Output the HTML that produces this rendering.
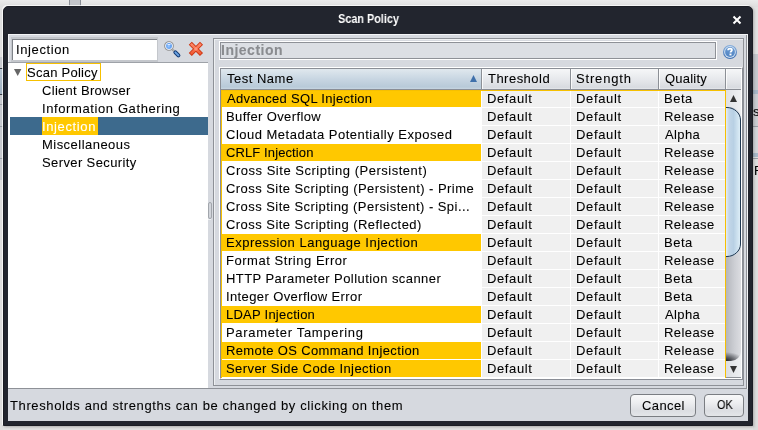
<!DOCTYPE html>
<html><head><meta charset="utf-8">
<style>
*{margin:0;padding:0;box-sizing:border-box}
html,body{width:758px;height:430px;overflow:hidden;background:#e2e2e2}
body{position:relative;font-family:"Liberation Sans",sans-serif;font-size:13px;color:#000}
.a{position:absolute}
.t{position:absolute;white-space:nowrap;line-height:13px;font-size:13px;will-change:transform;-webkit-text-stroke:0.08px currentColor}
svg{position:absolute;overflow:visible}
</style></head><body>
<div class="a" style="left:0px;top:0px;width:758px;height:7px;background:linear-gradient(#ebebeb,#dedede)"></div>
<div class="a" style="left:69px;top:0px;width:12px;height:6px;background:#c3c5ca;border-left:1px solid #8a8e96;border-right:1px solid #8a8e96"></div>
<div class="a" style="left:0px;top:7px;width:3px;height:50px;background:#e0e0e0"></div>
<div class="a" style="left:0px;top:57px;width:3px;height:12px;background:#c9cbd0"></div>
<div class="a" style="left:0px;top:68px;width:3px;height:1px;background:#3a3e46"></div>
<div class="a" style="left:0px;top:69px;width:3px;height:25px;background:linear-gradient(#b9c6d2,#9fb0c0)"></div>
<div class="a" style="left:0px;top:94px;width:3px;height:1px;background:#3a3e46"></div>
<div class="a" style="left:0px;top:95px;width:3px;height:85px;background:#c6c8cd"></div>
<div class="a" style="left:0px;top:104px;width:3px;height:1px;background:#9a9ea6"></div>
<div class="a" style="left:0px;top:126px;width:3px;height:1px;background:#9a9ea6"></div>
<div class="a" style="left:0px;top:158px;width:3px;height:1px;background:#9a9ea6"></div>
<div class="a" style="left:0px;top:180px;width:3px;height:250px;background:#dedede"></div>
<div class="a" style="left:753px;top:7px;width:5px;height:47px;background:#e2e2e2"></div>
<div class="a" style="left:753px;top:54px;width:5px;height:37px;background:#c6c9ce"></div>
<div class="a" style="left:753px;top:90px;width:5px;height:4px;background:#a9b9c9"></div>
<div class="a" style="left:753px;top:94px;width:5px;height:336px;background:#dedede"></div>
<div class="a" style="left:753px;top:94px;width:5px;height:32px;background:#cbcdd2"></div>
<div class="a" style="left:753px;top:127px;width:5px;height:26px;background:#d3d5d9"></div>
<div class="a" style="left:753px;top:126px;width:5px;height:1px;background:#9a9ea6"></div>
<div class="a" style="left:753px;top:100px;width:5px;height:80px;overflow:hidden"><div class="t" style="left:0px;top:5px;letter-spacing:0">s</div><div class="t" style="left:1px;top:64px;letter-spacing:0">F</div></div>
<div class="a" style="left:753px;top:153px;width:5px;height:4px;background:#a9b9c9"></div>
<div class="a" style="left:753px;top:158px;width:5px;height:1px;background:#9a9ea6"></div>
<div class="a" style="left:753px;top:426px;width:5px;height:4px;background:#dcdcdc"></div>
<div class="a" style="left:3px;top:6px;width:750px;height:420px;background:#22252e;border:1px solid #1b1d24;border-radius:5px 5px 0 0;box-shadow:-1px -1px 0 0 rgba(255,255,255,0.75),1px 1px 3px rgba(0,0,0,0.25)"></div>
<div class="t" style="left:337.90px;top:13px;color:#fff;font-size:12px;font-weight:bold;letter-spacing:0.000px;transform:scaleX(0.9030);transform-origin:1px 0;-webkit-text-stroke:0;">Scan Policy</div>
<svg style="left:732px;top:15px" width="10" height="10" viewBox="0 0 10 10"><path d="M1.5 1.5L8.5 8.5M8.5 1.5L1.5 8.5" stroke="#fff" stroke-width="2" stroke-linecap="butt"/></svg>
<div class="a" style="left:8px;top:34px;width:740px;height:387px;background:#d6d9df"></div>
<div class="a" style="left:8px;top:34px;width:740px;height:1px;background:#f4f5f7"></div>
<div class="a" style="left:8px;top:34px;width:1px;height:28px;background:#f4f5f7"></div>
<div class="a" style="left:746px;top:35px;width:1px;height:354px;background:#8e9197"></div>
<div class="a" style="left:747px;top:35px;width:1px;height:354px;background:#f4f5f7"></div>
<div class="a" style="left:8px;top:388px;width:739px;height:1px;background:#8e9197"></div>
<div class="a" style="left:11px;top:37px;width:147px;height:25px;background:#c4c7cc"></div>
<div class="a" style="left:12px;top:39px;width:145px;height:21px;background:#fff;border-top:1px solid #80848a;border-left:1px solid #80848a"></div>
<div class="t" style="left:16.00px;top:43px;color:#000;font-size:13px;letter-spacing:0.613px;">Injection</div>
<svg style="left:162px;top:39px" width="20" height="20" viewBox="0 0 20 20">
<defs><radialGradient id="gl" cx="0.45" cy="0.55" r="0.6"><stop offset="0" stop-color="#9cc8ff"/><stop offset="0.6" stop-color="#5c9df2"/><stop offset="1" stop-color="#4a8ae6"/></radialGradient>
<linearGradient id="hd" x1="0" y1="0" x2="1" y2="0"><stop offset="0" stop-color="#3c78c8"/><stop offset="1" stop-color="#8cbcf0"/></linearGradient></defs>
<line x1="10" y1="10" x2="12.2" y2="12.2" stroke="#9a9a9a" stroke-width="2.2"/>
<line x1="10.6" y1="10.3" x2="11.8" y2="11.5" stroke="#f4f4f4" stroke-width="0.8"/>
<line x1="13.4" y1="13.4" x2="16.4" y2="16.4" stroke="#123a74" stroke-width="4" stroke-linecap="round"/>
<line x1="13.4" y1="13.4" x2="16.4" y2="16.4" stroke="#6aa2e2" stroke-width="2" stroke-linecap="round"/>
<circle cx="7" cy="7" r="4.3" fill="none" stroke="#8c8c8c" stroke-width="1.1"/>
<circle cx="7" cy="7" r="3.5" fill="url(#gl)" stroke="#f6f6f6" stroke-width="0.9"/>
<ellipse cx="7" cy="5.6" rx="1.8" ry="0.7" fill="#fff" opacity="0.85"/>
</svg>
<svg style="left:186px;top:39px" width="20" height="20" viewBox="0 0 20 20">
<defs><linearGradient id="rx" x1="0" y1="0" x2="0" y2="1"><stop offset="0" stop-color="#ff8a6a"/><stop offset="1" stop-color="#f05a34"/></linearGradient></defs>
<path d="M4.3 4.3L15.5 15.5M15.5 4.3L4.3 15.5" stroke="#cc3412" stroke-width="4.3" stroke-linecap="butt"/>
<path d="M4.9 4.9L14.9 14.9M14.9 4.9L4.9 14.9" stroke="url(#rx)" stroke-width="2.6" stroke-linecap="butt"/>
<circle cx="9.9" cy="9.9" r="1.6" fill="#ff9478"/>
</svg>
<div class="a" style="left:8px;top:62px;width:200px;height:326px;background:#fff"></div>
<div class="a" style="left:8px;top:62px;width:200px;height:1px;background:#9ea2a8"></div>
<svg style="left:14px;top:69px" width="8" height="7" viewBox="0 0 8 7"><path d="M0 0H7.4L3.7 7Z" fill="#666"/></svg>
<div class="a" style="left:26px;top:63px;width:75px;height:18px;border:1px solid #f6c000"></div>
<div class="t" style="left:27.20px;top:66px;color:#000;font-size:13px;letter-spacing:0.260px;">Scan Policy</div>
<div class="t" style="left:42.30px;top:84px;color:#000;font-size:13px;letter-spacing:0.300px;">Client Browser</div>
<div class="t" style="left:42.30px;top:102px;color:#000;font-size:13px;letter-spacing:0.605px;">Information Gathering</div>
<div class="a" style="left:10px;top:117px;width:198px;height:18px;background:#3d6a8d"></div>
<div class="a" style="left:42px;top:117px;width:56px;height:18px;background:#ffc800"></div>
<div class="t" style="left:42.30px;top:120px;color:#fff;font-size:13px;letter-spacing:0.625px;">Injection</div>
<div class="t" style="left:42.30px;top:138px;color:#000;font-size:13px;letter-spacing:0.467px;">Miscellaneous</div>
<div class="t" style="left:42.30px;top:156px;color:#000;font-size:13px;letter-spacing:0.386px;">Server Security</div>
<div class="a" style="left:208px;top:202px;width:4px;height:17px;border:1px solid #a2a6ac;border-radius:2px;background:#d2d5db"></div>
<div class="a" style="left:208px;top:219px;width:3px;height:1px;background:#eef0f3"></div>
<div class="a" style="left:213px;top:38px;width:531px;height:348px;border:1px solid #8e9197;box-shadow:inset 1px 1px 0 #eef0f2"></div>
<div class="a" style="left:219px;top:41px;width:498px;height:19px;background:#dcdfe4;border:1px solid #fff"></div>
<div class="a" style="left:220px;top:42px;width:496px;height:17px;border:1px solid #8e9197"></div>
<div class="t" style="left:221.00px;top:44px;color:#8a8c90;font-size:14px;font-weight:bold;letter-spacing:0.500px;">Injection</div>
<svg style="left:723px;top:45px" width="14" height="14" viewBox="0 0 14 14">
<defs><linearGradient id="hb" x1="0" y1="0" x2="0" y2="1"><stop offset="0" stop-color="#86aedc"/><stop offset="1" stop-color="#3a6cb0"/></linearGradient>
<linearGradient id="hi" x1="0" y1="0" x2="0" y2="1"><stop offset="0" stop-color="#6a9ad2"/><stop offset="1" stop-color="#5284c2"/></linearGradient></defs>
<circle cx="7" cy="7" r="7" fill="url(#hb)"/>
<circle cx="7" cy="7" r="5.9" fill="#cfe0f2"/>
<circle cx="7" cy="7" r="4.9" fill="url(#hi)"/>
<path d="M5.1 5.3C5.1 4.2 5.9 3.6 7 3.6C8.1 3.6 8.9 4.2 8.9 5.1C8.9 6.2 7.5 6.3 7.5 7.5" fill="none" stroke="#fff" stroke-width="1.8" stroke-linecap="butt"/>
<rect x="6.5" y="8.6" width="2" height="1.8" fill="#fff"/>
</svg>
<div class="a" style="left:219px;top:67px;width:524px;height:313px;background:#fff;border-top:1px solid #fff;border-left:1px solid #fff;border-right:1px solid #8a8e96;border-bottom:1px solid #8a8e96"></div>
<div class="a" style="left:220px;top:68px;width:522px;height:311px;border-top:1px solid #8a8e96;border-left:1px solid #8a8e96;border-right:1px solid #fff;border-bottom:1px solid #fff"></div>
<div class="a" style="left:221px;top:69px;width:520px;height:20px;background:linear-gradient(#f6f7f8,#e4e6ea 60%,#d8dbe0 92%,#e6e8ec)"></div>
<div class="a" style="left:221px;top:69px;width:260px;height:20px;background:linear-gradient(#e0e8ee,#c8d6e2 50%,#b8cad8 90%,#c8d6e2)"></div>
<div class="a" style="left:221px;top:89px;width:520px;height:1px;background:#8a8e96"></div>
<div class="a" style="left:481px;top:69px;width:1px;height:20px;background:#8c9096"></div>
<div class="a" style="left:482px;top:69px;width:1px;height:20px;background:rgba(255,255,255,0.8)"></div>
<div class="a" style="left:570px;top:69px;width:1px;height:20px;background:#8c9096"></div>
<div class="a" style="left:571px;top:69px;width:1px;height:20px;background:rgba(255,255,255,0.8)"></div>
<div class="a" style="left:658px;top:69px;width:1px;height:20px;background:#8c9096"></div>
<div class="a" style="left:659px;top:69px;width:1px;height:20px;background:rgba(255,255,255,0.8)"></div>
<div class="a" style="left:725px;top:69px;width:1px;height:20px;background:#8c9096"></div>
<div class="a" style="left:726px;top:69px;width:1px;height:20px;background:rgba(255,255,255,0.8)"></div>
<div class="t" style="left:227.00px;top:72px;color:#000;font-size:13px;letter-spacing:0.500px;">Test Name</div>
<div class="t" style="left:488.10px;top:72px;color:#000;font-size:13px;letter-spacing:0.475px;">Threshold</div>
<div class="t" style="left:576.20px;top:72px;color:#000;font-size:13px;letter-spacing:0.829px;">Strength</div>
<div class="t" style="left:665.30px;top:72px;color:#000;font-size:13px;letter-spacing:0.217px;">Quality</div>
<svg style="left:470px;top:75px" width="7" height="7" viewBox="0 0 7 7"><path d="M3.5 0L7 7H0Z" fill="#3f70aa"/></svg>
<div class="a" style="left:221px;top:90px;width:260px;height:17px;background:#ffc800"></div>
<div class="a" style="left:482px;top:90px;width:88px;height:17px;background:#f0f0f0"></div>
<div class="a" style="left:571px;top:90px;width:87px;height:17px;background:#f0f0f0"></div>
<div class="a" style="left:659px;top:90px;width:66px;height:17px;background:#f0f0f0"></div>
<div class="t" style="left:226.90px;top:92px;color:#000;font-size:13px;letter-spacing:0.290px;">Advanced SQL Injection</div>
<div class="t" style="left:487.10px;top:92px;color:#000;font-size:13px;letter-spacing:0.617px;">Default</div>
<div class="t" style="left:576.20px;top:92px;color:#000;font-size:13px;letter-spacing:0.650px;">Default</div>
<div class="t" style="left:664.30px;top:92px;color:#000;font-size:13px;letter-spacing:0.533px;">Beta</div>
<div class="a" style="left:482px;top:108px;width:88px;height:17px;background:#f0f0f0"></div>
<div class="a" style="left:571px;top:108px;width:87px;height:17px;background:#f0f0f0"></div>
<div class="a" style="left:659px;top:108px;width:66px;height:17px;background:#f0f0f0"></div>
<div class="t" style="left:225.90px;top:110px;color:#000;font-size:13px;letter-spacing:0.379px;">Buffer Overflow</div>
<div class="t" style="left:487.10px;top:110px;color:#000;font-size:13px;letter-spacing:0.617px;">Default</div>
<div class="t" style="left:576.20px;top:110px;color:#000;font-size:13px;letter-spacing:0.650px;">Default</div>
<div class="t" style="left:664.30px;top:110px;color:#000;font-size:13px;letter-spacing:0.417px;">Release</div>
<div class="a" style="left:482px;top:126px;width:88px;height:17px;background:#f0f0f0"></div>
<div class="a" style="left:571px;top:126px;width:87px;height:17px;background:#f0f0f0"></div>
<div class="a" style="left:659px;top:126px;width:66px;height:17px;background:#f0f0f0"></div>
<div class="t" style="left:225.90px;top:128px;color:#000;font-size:13px;letter-spacing:0.494px;">Cloud Metadata Potentially Exposed</div>
<div class="t" style="left:487.10px;top:128px;color:#000;font-size:13px;letter-spacing:0.617px;">Default</div>
<div class="t" style="left:576.20px;top:128px;color:#000;font-size:13px;letter-spacing:0.650px;">Default</div>
<div class="t" style="left:664.80px;top:128px;color:#000;font-size:13px;letter-spacing:0.375px;">Alpha</div>
<div class="a" style="left:221px;top:144px;width:260px;height:17px;background:#ffc800"></div>
<div class="a" style="left:482px;top:144px;width:88px;height:17px;background:#f0f0f0"></div>
<div class="a" style="left:571px;top:144px;width:87px;height:17px;background:#f0f0f0"></div>
<div class="a" style="left:659px;top:144px;width:66px;height:17px;background:#f0f0f0"></div>
<div class="t" style="left:225.90px;top:146px;color:#000;font-size:13px;letter-spacing:0.108px;">CRLF Injection</div>
<div class="t" style="left:487.10px;top:146px;color:#000;font-size:13px;letter-spacing:0.617px;">Default</div>
<div class="t" style="left:576.20px;top:146px;color:#000;font-size:13px;letter-spacing:0.650px;">Default</div>
<div class="t" style="left:664.30px;top:146px;color:#000;font-size:13px;letter-spacing:0.417px;">Release</div>
<div class="a" style="left:482px;top:162px;width:88px;height:17px;background:#f0f0f0"></div>
<div class="a" style="left:571px;top:162px;width:87px;height:17px;background:#f0f0f0"></div>
<div class="a" style="left:659px;top:162px;width:66px;height:17px;background:#f0f0f0"></div>
<div class="t" style="left:225.90px;top:164px;color:#000;font-size:13px;letter-spacing:0.519px;">Cross Site Scripting (Persistent)</div>
<div class="t" style="left:487.10px;top:164px;color:#000;font-size:13px;letter-spacing:0.617px;">Default</div>
<div class="t" style="left:576.20px;top:164px;color:#000;font-size:13px;letter-spacing:0.650px;">Default</div>
<div class="t" style="left:664.30px;top:164px;color:#000;font-size:13px;letter-spacing:0.417px;">Release</div>
<div class="a" style="left:482px;top:180px;width:88px;height:17px;background:#f0f0f0"></div>
<div class="a" style="left:571px;top:180px;width:87px;height:17px;background:#f0f0f0"></div>
<div class="a" style="left:659px;top:180px;width:66px;height:17px;background:#f0f0f0"></div>
<div class="t" style="left:225.90px;top:182px;color:#000;font-size:13px;letter-spacing:0.448px;">Cross Site Scripting (Persistent) - Prime</div>
<div class="t" style="left:487.10px;top:182px;color:#000;font-size:13px;letter-spacing:0.617px;">Default</div>
<div class="t" style="left:576.20px;top:182px;color:#000;font-size:13px;letter-spacing:0.650px;">Default</div>
<div class="t" style="left:664.30px;top:182px;color:#000;font-size:13px;letter-spacing:0.417px;">Release</div>
<div class="a" style="left:482px;top:198px;width:88px;height:17px;background:#f0f0f0"></div>
<div class="a" style="left:571px;top:198px;width:87px;height:17px;background:#f0f0f0"></div>
<div class="a" style="left:659px;top:198px;width:66px;height:17px;background:#f0f0f0"></div>
<div class="t" style="left:225.90px;top:200px;color:#000;font-size:13px;letter-spacing:0.444px;">Cross Site Scripting (Persistent) - Spi...</div>
<div class="t" style="left:487.10px;top:200px;color:#000;font-size:13px;letter-spacing:0.617px;">Default</div>
<div class="t" style="left:576.20px;top:200px;color:#000;font-size:13px;letter-spacing:0.650px;">Default</div>
<div class="t" style="left:664.30px;top:200px;color:#000;font-size:13px;letter-spacing:0.417px;">Release</div>
<div class="a" style="left:482px;top:216px;width:88px;height:17px;background:#f0f0f0"></div>
<div class="a" style="left:571px;top:216px;width:87px;height:17px;background:#f0f0f0"></div>
<div class="a" style="left:659px;top:216px;width:66px;height:17px;background:#f0f0f0"></div>
<div class="t" style="left:225.90px;top:218px;color:#000;font-size:13px;letter-spacing:0.452px;">Cross Site Scripting (Reflected)</div>
<div class="t" style="left:487.10px;top:218px;color:#000;font-size:13px;letter-spacing:0.617px;">Default</div>
<div class="t" style="left:576.20px;top:218px;color:#000;font-size:13px;letter-spacing:0.650px;">Default</div>
<div class="t" style="left:664.30px;top:218px;color:#000;font-size:13px;letter-spacing:0.417px;">Release</div>
<div class="a" style="left:221px;top:234px;width:260px;height:17px;background:#ffc800"></div>
<div class="a" style="left:482px;top:234px;width:88px;height:17px;background:#f0f0f0"></div>
<div class="a" style="left:571px;top:234px;width:87px;height:17px;background:#f0f0f0"></div>
<div class="a" style="left:659px;top:234px;width:66px;height:17px;background:#f0f0f0"></div>
<div class="t" style="left:225.90px;top:236px;color:#000;font-size:13px;letter-spacing:0.500px;">Expression Language Injection</div>
<div class="t" style="left:487.10px;top:236px;color:#000;font-size:13px;letter-spacing:0.617px;">Default</div>
<div class="t" style="left:576.20px;top:236px;color:#000;font-size:13px;letter-spacing:0.650px;">Default</div>
<div class="t" style="left:664.30px;top:236px;color:#000;font-size:13px;letter-spacing:0.533px;">Beta</div>
<div class="a" style="left:482px;top:252px;width:88px;height:17px;background:#f0f0f0"></div>
<div class="a" style="left:571px;top:252px;width:87px;height:17px;background:#f0f0f0"></div>
<div class="a" style="left:659px;top:252px;width:66px;height:17px;background:#f0f0f0"></div>
<div class="t" style="left:225.90px;top:254px;color:#000;font-size:13px;letter-spacing:0.539px;">Format String Error</div>
<div class="t" style="left:487.10px;top:254px;color:#000;font-size:13px;letter-spacing:0.617px;">Default</div>
<div class="t" style="left:576.20px;top:254px;color:#000;font-size:13px;letter-spacing:0.650px;">Default</div>
<div class="t" style="left:664.30px;top:254px;color:#000;font-size:13px;letter-spacing:0.417px;">Release</div>
<div class="a" style="left:482px;top:270px;width:88px;height:17px;background:#f0f0f0"></div>
<div class="a" style="left:571px;top:270px;width:87px;height:17px;background:#f0f0f0"></div>
<div class="a" style="left:659px;top:270px;width:66px;height:17px;background:#f0f0f0"></div>
<div class="t" style="left:225.90px;top:272px;color:#000;font-size:13px;letter-spacing:0.432px;">HTTP Parameter Pollution scanner</div>
<div class="t" style="left:487.10px;top:272px;color:#000;font-size:13px;letter-spacing:0.617px;">Default</div>
<div class="t" style="left:576.20px;top:272px;color:#000;font-size:13px;letter-spacing:0.650px;">Default</div>
<div class="t" style="left:664.30px;top:272px;color:#000;font-size:13px;letter-spacing:0.533px;">Beta</div>
<div class="a" style="left:482px;top:288px;width:88px;height:17px;background:#f0f0f0"></div>
<div class="a" style="left:571px;top:288px;width:87px;height:17px;background:#f0f0f0"></div>
<div class="a" style="left:659px;top:288px;width:66px;height:17px;background:#f0f0f0"></div>
<div class="t" style="left:225.90px;top:290px;color:#000;font-size:13px;letter-spacing:0.386px;">Integer Overflow Error</div>
<div class="t" style="left:487.10px;top:290px;color:#000;font-size:13px;letter-spacing:0.617px;">Default</div>
<div class="t" style="left:576.20px;top:290px;color:#000;font-size:13px;letter-spacing:0.650px;">Default</div>
<div class="t" style="left:664.30px;top:290px;color:#000;font-size:13px;letter-spacing:0.533px;">Beta</div>
<div class="a" style="left:221px;top:306px;width:260px;height:17px;background:#ffc800"></div>
<div class="a" style="left:482px;top:306px;width:88px;height:17px;background:#f0f0f0"></div>
<div class="a" style="left:571px;top:306px;width:87px;height:17px;background:#f0f0f0"></div>
<div class="a" style="left:659px;top:306px;width:66px;height:17px;background:#f0f0f0"></div>
<div class="t" style="left:225.90px;top:308px;color:#000;font-size:13px;letter-spacing:0.238px;">LDAP Injection</div>
<div class="t" style="left:487.10px;top:308px;color:#000;font-size:13px;letter-spacing:0.617px;">Default</div>
<div class="t" style="left:576.20px;top:308px;color:#000;font-size:13px;letter-spacing:0.650px;">Default</div>
<div class="t" style="left:664.80px;top:308px;color:#000;font-size:13px;letter-spacing:0.375px;">Alpha</div>
<div class="a" style="left:482px;top:324px;width:88px;height:17px;background:#f0f0f0"></div>
<div class="a" style="left:571px;top:324px;width:87px;height:17px;background:#f0f0f0"></div>
<div class="a" style="left:659px;top:324px;width:66px;height:17px;background:#f0f0f0"></div>
<div class="t" style="left:225.90px;top:326px;color:#000;font-size:13px;letter-spacing:0.672px;">Parameter Tampering</div>
<div class="t" style="left:487.10px;top:326px;color:#000;font-size:13px;letter-spacing:0.617px;">Default</div>
<div class="t" style="left:576.20px;top:326px;color:#000;font-size:13px;letter-spacing:0.650px;">Default</div>
<div class="t" style="left:664.30px;top:326px;color:#000;font-size:13px;letter-spacing:0.417px;">Release</div>
<div class="a" style="left:221px;top:342px;width:260px;height:17px;background:#ffc800"></div>
<div class="a" style="left:482px;top:342px;width:88px;height:17px;background:#f0f0f0"></div>
<div class="a" style="left:571px;top:342px;width:87px;height:17px;background:#f0f0f0"></div>
<div class="a" style="left:659px;top:342px;width:66px;height:17px;background:#f0f0f0"></div>
<div class="t" style="left:225.90px;top:344px;color:#000;font-size:13px;letter-spacing:0.373px;">Remote OS Command Injection</div>
<div class="t" style="left:487.10px;top:344px;color:#000;font-size:13px;letter-spacing:0.617px;">Default</div>
<div class="t" style="left:576.20px;top:344px;color:#000;font-size:13px;letter-spacing:0.650px;">Default</div>
<div class="t" style="left:664.30px;top:344px;color:#000;font-size:13px;letter-spacing:0.417px;">Release</div>
<div class="a" style="left:221px;top:360px;width:260px;height:17px;background:#ffc800"></div>
<div class="a" style="left:482px;top:360px;width:88px;height:17px;background:#f0f0f0"></div>
<div class="a" style="left:571px;top:360px;width:87px;height:17px;background:#f0f0f0"></div>
<div class="a" style="left:659px;top:360px;width:66px;height:17px;background:#f0f0f0"></div>
<div class="t" style="left:225.90px;top:362px;color:#000;font-size:13px;letter-spacing:0.424px;">Server Side Code Injection</div>
<div class="t" style="left:487.10px;top:362px;color:#000;font-size:13px;letter-spacing:0.617px;">Default</div>
<div class="t" style="left:576.20px;top:362px;color:#000;font-size:13px;letter-spacing:0.650px;">Default</div>
<div class="t" style="left:664.30px;top:362px;color:#000;font-size:13px;letter-spacing:0.417px;">Release</div>
<div class="a" style="left:221px;top:90px;width:505px;height:288px;border:1px solid #f6c000;border-bottom:none"></div>
<div class="a" style="left:726px;top:90px;width:15px;height:288px;background:linear-gradient(90deg,#dfe1e5,#eff0f2)"></div>
<div class="a" style="left:726px;top:107px;width:15px;height:254px;border-radius:0 12px 10px 0;background:radial-gradient(ellipse 18px 9px at 0% 100%,rgba(25,27,33,0.95),rgba(25,27,33,0.55) 45%,rgba(25,27,33,0) 100%),linear-gradient(90deg,#b4b6bc,#ccced3 55%,#dcdde1)"></div>
<div class="a" style="left:726px;top:90px;width:15px;height:17px;background:linear-gradient(90deg,#dfe1e5,#eff0f2)"></div>
<svg style="left:730px;top:95px" width="8" height="7" viewBox="0 0 8 7"><path d="M3.5 0L7 7H0Z" fill="#333"/></svg>
<svg style="left:726px;top:107px" width="15" height="150" viewBox="0 0 15 150">
<defs><linearGradient id="th" x1="0" y1="0" x2="1" y2="0"><stop offset="0" stop-color="#e6eef6"/><stop offset="0.2" stop-color="#c2d6e8"/><stop offset="0.5" stop-color="#b8d0e4"/><stop offset="1" stop-color="#e2f2fa"/></linearGradient></defs>
<path d="M0 0H1C8.5 0 15 6 15 13V137C15 144 8.5 150 1 150H0Z" fill="url(#th)"/>
<path d="M0 0.5H1C8 0.5 14.5 6 14.5 13V137C14.5 144 8 149.5 1 149.5H0" fill="none" stroke="#1e3650" stroke-width="1"/>
</svg>
<div class="a" style="left:726px;top:361px;width:15px;height:17px;background:linear-gradient(90deg,#dcdee2,#eef0f2);border-bottom:1px solid #8e9298"></div>
<svg style="left:730px;top:366px" width="8" height="7" viewBox="0 0 8 7"><path d="M0 0H7L3.5 7Z" fill="#333"/></svg>
<div class="t" style="left:10.10px;top:399px;color:#000;font-size:13px;letter-spacing:0.614px;">Thresholds and strengths can be changed by clicking on them</div>
<div class="a" style="left:630px;top:394px;width:66px;height:23px;border:1px solid #7a7d82;border-radius:4px;background:linear-gradient(#f8f8f9,#eeeff1 35%,#dcdee2 75%,#e4e6e9)"></div>
<div class="t" style="left:642.20px;top:399px;color:#000;font-size:13px;letter-spacing:0.400px;">Cancel</div>
<div class="a" style="left:704px;top:394px;width:40px;height:23px;border:1px solid #7a7d82;border-radius:4px;background:linear-gradient(#f8f8f9,#eeeff1 35%,#dcdee2 75%,#e4e6e9)"></div>
<div class="t" style="left:717.30px;top:399px;color:#000;font-size:12px;letter-spacing:0.000px;transform:scaleX(0.9118);transform-origin:0px 0;">OK</div>
</body></html>
